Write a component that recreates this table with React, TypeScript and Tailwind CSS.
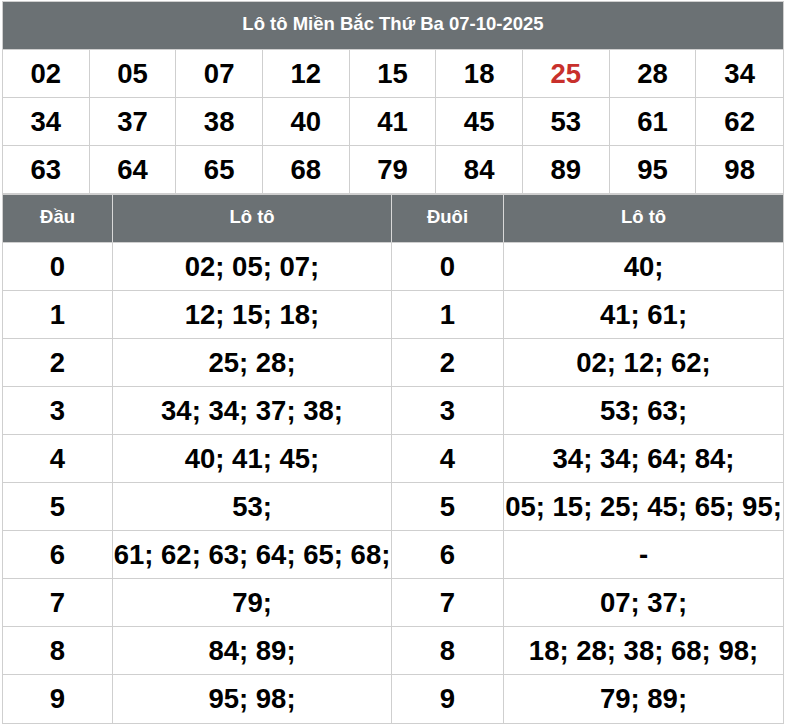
const numbers = [
  "02", "05", "07", "12", "15", "18", "25", "28", "34",
  "34", "37", "38", "40", "41", "45", "53", "61", "62",
  "63", "64", "65", "68", "79", "84", "89", "95", "98",
];

const rows = [
  { head: "0", headLoto: "02; 05; 07;", tail: "0", tailLoto: "40;" },
  { head: "1", headLoto: "12; 15; 18;", tail: "1", tailLoto: "41; 61;" },
  { head: "2", headLoto: "25; 28;", tail: "2", tailLoto: "02; 12; 62;" },
  { head: "3", headLoto: "34; 34; 37; 38;", tail: "3", tailLoto: "53; 63;" },
  { head: "4", headLoto: "40; 41; 45;", tail: "4", tailLoto: "34; 34; 64; 84;" },
  { head: "5", headLoto: "53;", tail: "5", tailLoto: "05; 15; 25; 45; 65; 95;" },
  { head: "6", headLoto: "61; 62; 63; 64; 65; 68;", tail: "6", tailLoto: "-" },
  { head: "7", headLoto: "79;", tail: "7", tailLoto: "07; 37;" },
  { head: "8", headLoto: "84; 89;", tail: "8", tailLoto: "18; 28; 38; 68; 98;" },
  { head: "9", headLoto: "95; 98;", tail: "9", tailLoto: "79; 89;" },
];

const cols = "grid grid-cols-[110px_279px_112px_1fr]";

export default function App() {
  return (
    <div className="min-h-[726px] bg-white pt-[1px] pl-[2px] font-['Liberation_Sans',Arial,sans-serif]">
      <div className="w-[782px] border border-[#cfcfcf]">
        <div className="flex h-[48px] items-center justify-center border-b border-[#cfcfcf] bg-[#6b7174] pb-[3px] text-[18.5px] font-bold text-white">
          Lô tô Miền Bắc Thứ Ba 07-10-2025
        </div>

        <div className="grid grid-cols-9">
          {numbers.map((n, i) => (
            <div
              key={i}
              className={`flex h-[48px] items-center justify-center border-b border-[#cfcfcf] text-[27.5px] font-bold ${
                i % 9 === 8 ? "" : "border-r"
              } ${n === "25" && i === 6 ? "text-[#c8302c]" : "text-black"}`}
            >
              {n}
            </div>
          ))}
        </div>

        <div className={`${cols} h-[49px] border-t border-b border-[#cfcfcf] bg-[#6b7174] text-[18.5px] font-bold text-white`}>
          <div className="flex items-center justify-center border-r border-[#d8d8d8] pb-[3px]">Đầu</div>
          <div className="flex items-center justify-center border-r border-[#d8d8d8] pb-[3px]">Lô tô</div>
          <div className="flex items-center justify-center border-r border-[#d8d8d8] pb-[3px]">Đuôi</div>
          <div className="flex items-center justify-center pb-[3px]">Lô tô</div>
        </div>

        {rows.map((r, i) => (
          <div
            key={r.head}
            className={`${cols} h-[48px] whitespace-nowrap text-[27.5px] font-bold text-black ${
              i === rows.length - 1 ? "" : "border-b border-[#cfcfcf]"
            }`}
          >
            <div className="flex items-center justify-center border-r border-[#cfcfcf]">{r.head}</div>
            <div className="flex items-center justify-center border-r border-[#cfcfcf]">{r.headLoto}</div>
            <div className="flex items-center justify-center border-r border-[#cfcfcf]">{r.tail}</div>
            <div className="flex items-center justify-center">{r.tailLoto}</div>
          </div>
        ))}
      </div>
    </div>
  );
}
